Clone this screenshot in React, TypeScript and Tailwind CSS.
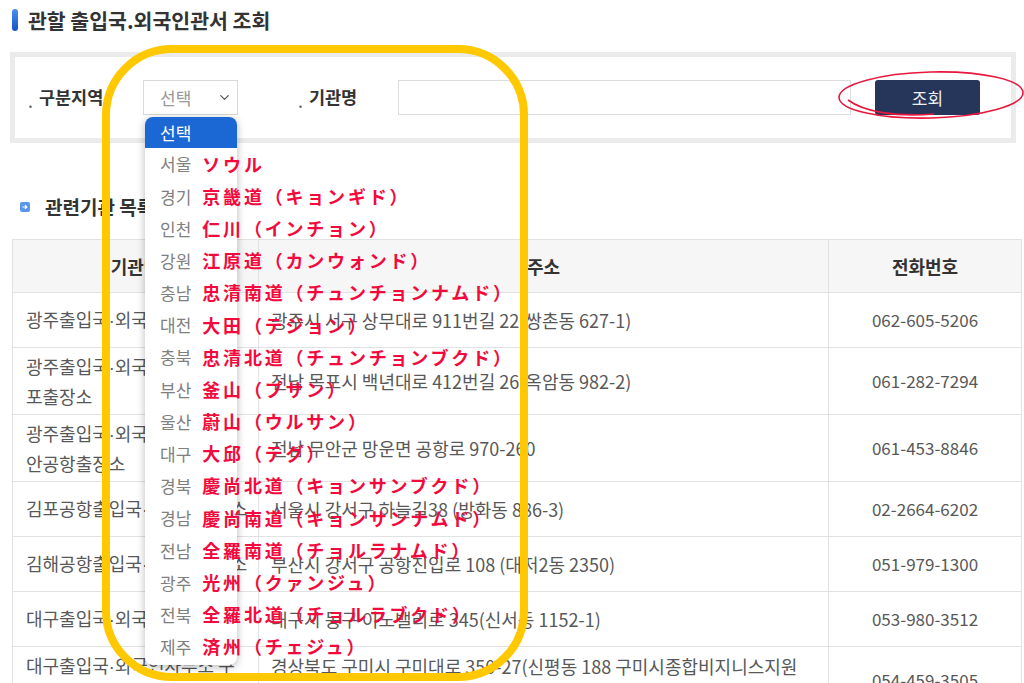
import React from "react";
import { ChevronDown } from "lucide-react";

const regions: [string, string][] = [
  ["서울", "ソウル"],
  ["경기", "京畿道（キョンギド）"],
  ["인천", "仁川（インチョン）"],
  ["강원", "江原道（カンウォンド）"],
  ["충남", "忠清南道（チュンチョンナムド）"],
  ["대전", "大田（テジョン）"],
  ["충북", "忠清北道（チュンチョンブクド）"],
  ["부산", "釜山（プサン）"],
  ["울산", "蔚山（ウルサン）"],
  ["대구", "大邱（テグ）"],
  ["경북", "慶尚北道（キョンサンブクド）"],
  ["경남", "慶尚南道（キョンサンナムド）"],
  ["전남", "全羅南道（チョルラナムド）"],
  ["광주", "光州（クァンジュ）"],
  ["전북", "全羅北道（チョルラブクド）"],
  ["제주", "済州（チェジュ）"],
];

const offices = [
  { name: "광주출입국·외국인사무소", addr: "광주시 서구 상무대로 911번길 22(쌍촌동 627-1)", tel: "062-605-5206" },
  { name: "광주출입국·외국인사무소 목포출장소", addr: "전남 목포시 백년대로 412번길 26(옥암동 982-2)", tel: "061-282-7294" },
  { name: "광주출입국·외국인사무소 무안공항출장소", addr: "전남 무안군 망운면 공항로 970-260", tel: "061-453-8846" },
  { name: "김포공항출입국·외국인사무소", addr: "서울시 강서구 하늘길38 (방화동 886-3)", tel: "02-2664-6202" },
  { name: "김해공항출입국·외국인사무소", addr: "부산시 강서구 공항진입로 108 (대저2동 2350)", tel: "051-979-1300" },
  { name: "대구출입국·외국인사무소", addr: "대구시 동구 이노밸리로 345(신서동 1152-1)", tel: "053-980-3512" },
  { name: "대구출입국·외국인사무소 구미출장소", addr: "경상북도 구미시 구미대로 350-27(신평동 188 구미시종합비지니스지원센터)", tel: "054-459-3505" },
];

// the middle dot is narrow in the original font, the CJK one is full width
function OfficeName({ name }: { name: string }) {
  const [head, tail] = name.split("·");
  return (
    <>
      {head}
      <span className="font-['Liberation_Sans',sans-serif]">·</span>
      {tail}
    </>
  );
}

function RegionSelect() {
  return (
    <div className="relative w-[95px] h-[35px] border border-[#d9d9d9] bg-white flex items-center justify-between pl-[16px] pr-[5px] text-[17px] text-[#999]">
      <span>선택</span>
      <ChevronDown className="w-[15px] h-[15px] text-[#555]" strokeWidth={2} />

      {/* open option list */}
      <div className="absolute z-20 left-[1px] top-[36px] w-[92px] bg-white rounded-[8px] shadow-[0_2px_8px_rgba(0,0,0,0.28)] pb-[2px]">
        <div className="h-[31px] flex items-center pl-[15px] bg-[#1b67d4] text-white rounded-t-[8px]">선택</div>
        {regions.map(([ko, ja]) => (
          <div key={ko} className="h-[32.2px] flex items-center pl-[15px] whitespace-nowrap">
            <span className="text-[#808080]">{ko}</span>
            <span className="ml-[11px] font-['Noto_Sans_CJK_JP',sans-serif] font-bold text-[18px] tracking-[2.8px] text-[#f20a3d]">
              {ja}
            </span>
          </div>
        ))}
      </div>
    </div>
  );
}

export default function App() {
  return (
    <div className="relative w-[1024px] h-[683px] overflow-hidden bg-white font-['Noto_Sans_CJK_KR','Noto_Sans',sans-serif] text-[#333]">
      {/* page title */}
      <div className="h-[40px] flex items-center pl-[12px] gap-[10px]">
        <span className="w-[6px] h-[22px] rounded-[3px] bg-gradient-to-b from-[#4b8ff2] to-[#1652c4]" />
        <h1 className="text-[20.5px] font-bold text-[#333]">관할 출입국.외국인관서 조회</h1>
      </div>

      {/* search box */}
      <div className="mt-[12px] mx-[10px] w-[1006px] h-[91px] border-[5px] border-[#ebebeb] flex items-center pl-[13px]">
        <div className="w-[115px] flex items-center text-[17.5px] font-bold">
          <span className="mt-[8px] mr-[6px] font-normal text-[#555]">.</span>
          구분지역
        </div>
        <RegionSelect />
        <div className="ml-[60px] w-[100px] flex items-center text-[17.5px] font-bold">
          <span className="mt-[8px] mr-[6px] font-normal text-[#555]">.</span>
          기관명
        </div>
        <input className="w-[453px] h-[35px] border border-[#dcdcdc] outline-none" />
        <button className="ml-[24px] w-[105px] h-[35px] rounded-[3px] bg-[#26355a] text-[#eef0f4] text-[17px]">
          조회
        </button>
      </div>

      {/* list heading */}
      <div className="mt-[49px] h-[30px] flex items-center pl-[20px] gap-[15px]">
        <svg width="10" height="10" viewBox="0 0 10 10">
          <rect width="10" height="10" rx="2" fill="#5a97ec" />
          <path d="M2.5 5h4.2M5 3.2L6.8 5 5 6.8" stroke="#fff" strokeWidth="1.2" fill="none" />
        </svg>
        <h2 className="text-[19px] font-bold">관련기관 목록</h2>
      </div>

      {/* office table */}
      <table className="mt-[17px] ml-[12px] w-[1009px] border-collapse table-fixed text-[18px] text-[#585858]">
        <colgroup>
          <col className="w-[246px]" />
          <col className="w-[570px]" />
          <col className="w-[193px]" />
        </colgroup>
        <thead>
          <tr className="h-[53px] bg-[#f6f6f6]">
            <th className="border border-[#e2e2e2] font-bold text-[#333]">기관명</th>
            <th className="border border-[#e2e2e2] font-bold text-[#333]">주소</th>
            <th className="border border-[#e2e2e2] font-bold text-[#333]">전화번호</th>
          </tr>
        </thead>
        <tbody>
          {offices.map((o) => (
            <tr key={o.tel} className="h-[55px]">
              <td className="border border-[#e2e2e2] pl-[13px] pr-[10px] py-[4px] leading-[28px]">
                <OfficeName name={o.name} />
              </td>
              <td className="border border-[#e2e2e2] pl-[12px] pr-[24px] py-[4px] leading-[28px]">{o.addr}</td>
              <td className="border border-[#e2e2e2] text-center text-[17px] leading-[28px]">{o.tel}</td>
            </tr>
          ))}
        </tbody>
      </table>

      {/* yellow highlight frame */}
      <div className="absolute z-30 left-[102px] top-[45px] w-[426px] h-[636px] border-[8px] border-[#ffc800] rounded-[70px] pointer-events-none" />

      {/* red circle around the search button */}
      <svg className="absolute z-30 left-[834px] top-[68px] pointer-events-none" width="192" height="56" viewBox="0 0 192 56">
        <ellipse cx="97" cy="27" rx="92" ry="23" fill="none" stroke="#e8173d" strokeWidth="1.6" transform="rotate(-1.5 97 27)" />
        <path d="M14 32 C 30 44, 62 49, 100 46" fill="none" stroke="#e8173d" strokeWidth="1.6" />
      </svg>
    </div>
  );
}
